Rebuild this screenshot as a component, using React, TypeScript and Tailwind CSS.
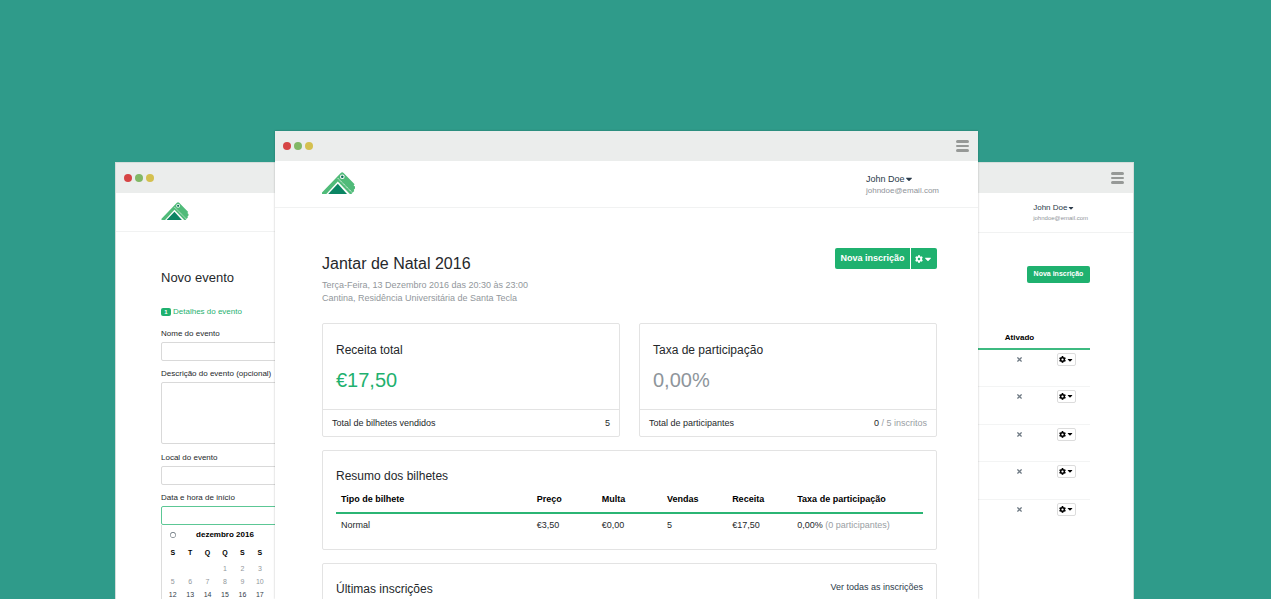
import React from "react";
import { FaCaretDown, FaCog, FaRegCircle, FaTimes } from "react-icons/fa";

function Logo({ className }: { className: string }) {
  return (
    <svg viewBox="0 0 33 22" className={className} role="img" aria-label="Logo">
      <path
        d="M0 22V20.4L18.8 1Q20.2-.4 21.6 1L32.6 12.2 31.6 13.4 33 14.6V16.6L31.8 17.8 32.2 19 29.4 22Z"
        fill="#50bb79"
      />
      <path d="M4.4 22 15.8 9.6 27.8 22Z" fill="#fff" />
      <path d="M6.2 22 15.8 11.8 25 22Z" fill="#0b8563" />
      <path d="M15.8 6.2 30.6 21" stroke="#fff" strokeWidth="0.9" strokeDasharray="1.4 0.7" fill="none" />
      <circle cx="20.3" cy="4.7" r="2.3" fill="#fff" />
      <circle cx="20.3" cy="4.7" r="1.3" fill="#0b6b55" />
    </svg>
  );
}

function TitleBar({ dots = true, menu = true }: { dots?: boolean; menu?: boolean }) {
  return (
    <div className="flex h-[30px] shrink-0 items-center justify-between bg-[#ebedec] pr-[9px] pl-2">
      <div className="flex gap-[3px]">
        {dots && (
          <>
            <span className="size-2 rounded-full bg-[#d64545]" />
            <span className="size-2 rounded-full bg-[#82b866]" />
            <span className="size-2 rounded-full bg-[#d4c04f]" />
          </>
        )}
      </div>
      {menu && (
        <button type="button" aria-label="Menu" className="flex w-[13px] flex-col gap-[2px]">
          <span className="h-[3px] rounded-xs bg-[#969997]" />
          <span className="h-[2px] rounded-xs bg-[#969997]" />
          <span className="h-[3px] rounded-xs bg-[#969997]" />
        </button>
      )}
    </div>
  );
}

const weekdays = ["S", "T", "Q", "Q", "S", "S", ""];
const pastDays = ["", "", "", "1", "2", "3", "", "5", "6", "7", "8", "9", "10", ""];
const nextDays = ["12", "13", "14", "15", "16", "17"];

function Calendar() {
  return (
    <div className="w-[128px] rounded-b-xs border border-t-0 border-[#dcdcdc] px-[2px] pt-[3px]">
      <div className="grid h-[14px] grid-cols-7 items-center">
        <button type="button" aria-label="Mês anterior" className="flex justify-center text-[#5b6770]">
          <FaRegCircle className="size-[6px]" />
        </button>
        <span className="col-span-5 text-center text-[8px] font-bold text-black">dezembro 2016</span>
      </div>
      <div className="mt-1 grid grid-cols-7 text-center text-[7px] leading-[13px]">
        {weekdays.map((d, i) => (
          <span key={i} className="mb-[3px] font-bold text-black">{d}</span>
        ))}
        {pastDays.map((d, i) => (
          <span key={i} className="text-[#92979c]">{d}</span>
        ))}
        {nextDays.map((d) => (
          <span key={d} className="text-[#34404a]">{d}</span>
        ))}
      </div>
    </div>
  );
}

function EventForm() {
  const input = "block h-[19px] w-full rounded-xs border border-[#d9d9d9] px-1 outline-none";
  const label = "block h-[17px] text-[8px] leading-[17px]";
  return (
    <section className="mt-[31px] overflow-hidden border-t border-l border-[#d5dddb] bg-white">
      <TitleBar menu={false} />
      <header className="flex h-[39px] items-center border-b border-[#f1f2f2] pb-[3px] pl-[45px]">
        <Logo className="h-[18px] w-7" />
      </header>
      <form className="w-80 pt-[37px] pl-[45px]">
        <h2 className="text-[13px] leading-[18px]">Novo evento</h2>
        <p className="mt-5 flex h-[10px] items-center gap-[2px] text-[8px] text-[#1fb16f]">
          <span className="flex h-2 w-[10px] items-center justify-center rounded-xs bg-[#1fb16f] text-[6px] font-bold text-white">
            1
          </span>
          Detalhes do evento
        </p>
        <div className="mt-2">
          <label htmlFor="name" className={label}>Nome do evento</label>
          <input id="name" className={input} />
        </div>
        <div className="mt-1">
          <label htmlFor="description" className={label}>Descrição do evento (opcional)</label>
          <textarea
            id="description"
            className="block h-[62px] w-full resize-none rounded-xs border border-[#d9d9d9] outline-none"
          />
        </div>
        <div className="mt-[5px]">
          <label htmlFor="place" className={label}>Local do evento</label>
          <input id="place" className={input} />
        </div>
        <div className="mt-1">
          <label htmlFor="start" className={label}>Data e hora de início</label>
          <input
            id="start"
            className="block h-[19px] w-full rounded-xs border border-[#5cc795] px-1 outline-none"
          />
          <Calendar />
        </div>
      </form>
    </section>
  );
}

function StatCard({
  title,
  value,
  valueClass,
  label,
  children,
}: {
  title: string;
  value: string;
  valueClass: string;
  label: string;
  children: React.ReactNode;
}) {
  return (
    <article className="rounded-xs border border-[#e3e3e3]">
      <div className="h-[85px] px-[13px] pt-[17px]">
        <h2 className="text-[12px] leading-[18px]">{title}</h2>
        <p className={valueClass}>{value}</p>
      </div>
      <div className="flex h-[27px] items-center justify-between border-t border-[#e3e3e3] px-[9px] pt-[2px] text-[9px]">
        <span>{label}</span>
        <span>{children}</span>
      </div>
    </article>
  );
}

function TicketTable() {
  return (
    <table className="w-full table-fixed text-left text-[9px]">
      <colgroup>
        <col className="w-1/3" />
        <col className="w-[11.1%]" />
        <col className="w-[11.1%]" />
        <col className="w-[11.1%]" />
        <col className="w-[11.1%]" />
        <col />
      </colgroup>
      <thead>
        <tr className="h-[25px] border-b-2 border-[#2bb574] text-black">
          <th className="px-[5px]">Tipo de bilhete</th>
          <th className="px-[5px]">Preço</th>
          <th className="px-[5px]">Multa</th>
          <th className="px-[5px]">Vendas</th>
          <th className="px-[5px]">Receita</th>
          <th className="px-[5px]">Taxa de participação</th>
        </tr>
      </thead>
      <tbody>
        <tr className="h-6">
          <td className="px-[5px]">Normal</td>
          <td className="px-[5px]">€3,50</td>
          <td className="px-[5px]">€0,00</td>
          <td className="px-[5px]">5</td>
          <td className="px-[5px]">€17,50</td>
          <td className="px-[5px] whitespace-nowrap">
            0,00% <span className="text-[#999ea3]">(0 participantes)</span>
          </td>
        </tr>
      </tbody>
    </table>
  );
}

function Dashboard() {
  return (
    <section className="z-10 overflow-hidden bg-white shadow-[0_0_2px_rgba(0,0,0,0.25)]">
      <TitleBar />
      <header className="flex h-[47px] items-center justify-between border-b border-[#f1f2f2] pr-[39px] pl-[47px]">
        <Logo className="mb-[2px] h-[22px] w-[33px]" />
        <div className="pt-px leading-3">
          <button type="button" className="flex items-center text-[9px] text-[#2b3a4a]">
            John Doe <FaCaretDown className="size-[10px]" />
          </button>
          <p className="text-[8px] text-[#8f9499]">johndoe@email.com</p>
        </div>
      </header>
      <div className="pt-10 pr-[41px] pl-[47px]">
        <div className="flex items-start justify-between">
          <div>
            <h1 className="pt-1 text-[16px] leading-6">Jantar de Natal 2016</h1>
            <p className="mt-[3px] text-[9px] leading-[13px] text-[#92979c]">
              Terça-Feira, 13 Dezembro 2016 das 20:30 às 23:00
              <br />
              Cantina, Residência Universitária de Santa Tecla
            </p>
          </div>
          <div className="flex h-[21px] gap-px text-[9px] font-bold text-white">
            <button type="button" className="w-[75px] rounded-l-xs bg-[#1fb16f]">
              Nova inscrição
            </button>
            <button
              type="button"
              aria-label="Opções"
              className="flex w-[26px] items-center justify-center rounded-r-xs bg-[#1fb16f]"
            >
              <FaCog className="size-2" />
              <FaCaretDown className="size-[10px]" />
            </button>
          </div>
        </div>
        <div className="mt-[18px] grid grid-cols-2 gap-[19px]">
          <StatCard
            title="Receita total"
            value="€17,50"
            valueClass="mt-[7px] text-[20px] leading-7 text-[#1fb16f]"
            label="Total de bilhetes vendidos"
          >
            5
          </StatCard>
          <StatCard
            title="Taxa de participação"
            value="0,00%"
            valueClass="mt-[7px] text-[20px] leading-7 text-[#8e959b]"
            label="Total de participantes"
          >
            0 <span className="text-[#999ea3]">/ 5 inscritos</span>
          </StatCard>
        </div>
        <article className="mt-[13px] rounded-xs border border-[#e3e3e3] px-[13px] pt-4 pb-3">
          <h2 className="text-[12px] leading-[18px]">Resumo dos bilhetes</h2>
          <div className="pt-[3px]">
            <TicketTable />
          </div>
        </article>
        <article className="mt-[13px] flex items-start justify-between rounded-xs border border-[#e3e3e3] px-[13px] py-4">
          <h2 className="text-[12px] leading-[18px]">Últimas inscrições</h2>
          <a href="#inscricoes" className="text-[9px] leading-[14px] text-[#2b3a4a]">
            Ver todas as inscrições
          </a>
        </article>
      </div>
    </section>
  );
}

function RegistrationList() {
  return (
    <section className="mt-[31px] overflow-hidden border-t border-r border-[#d5dddb] bg-white">
      <TitleBar dots={false} />
      <header className="flex h-10 items-center justify-end border-b border-[#f1f2f2] pr-[45px]">
        <div className="leading-[10px]">
          <button type="button" className="flex items-center text-[8px] text-[#2b3a4a]">
            John Doe <FaCaretDown className="size-2" />
          </button>
          <p className="text-[6px] text-[#8f9499]">johndoe@email.com</p>
        </div>
      </header>
      <div className="pt-[33px] pr-[43px]">
        <div className="flex justify-end">
          <button type="button" className="h-[17px] w-[63px] rounded-xs bg-[#1fb16f] text-[7px] font-bold text-white">
            Nova inscrição
          </button>
        </div>
        <table className="mt-[45px] w-full text-[8px]">
          <thead>
            <tr className="h-[21px] border-b-2 border-[#3dba81] text-black">
              <th className="w-3/4 pl-1">Ativado</th>
              <th aria-label="Opções" />
            </tr>
          </thead>
          <tbody>
            {[1, 2, 3, 4, 5].map((n) => (
              <tr key={n} className="border-b border-[#f3f4f4] align-top last:border-0 odd:h-[37px] even:h-[38px]">
                <td className="pt-[6px] pl-1">
                  <FaTimes className="mx-auto size-[7px] text-[#6f7a84]" />
                </td>
                <td className="pt-[3px] pr-[14px]">
                  <button
                    type="button"
                    aria-label="Opções da inscrição"
                    className="float-right flex h-[13px] w-[19px] items-center justify-center rounded-xs border border-[#dcdcdc] text-black"
                  >
                    <FaCog className="size-[7px]" />
                    <FaCaretDown className="size-2" />
                  </button>
                </td>
              </tr>
            ))}
          </tbody>
        </table>
      </div>
    </section>
  );
}

export default function App() {
  return (
    <main className="grid h-screen grid-cols-[115fr_160fr_703fr_156fr_137fr] overflow-hidden bg-[#2f9b8a] pt-[131px] font-['Liberation_Sans',Arial,sans-serif] text-[#25282b]">
      <span />
      <EventForm />
      <Dashboard />
      <RegistrationList />
    </main>
  );
}
